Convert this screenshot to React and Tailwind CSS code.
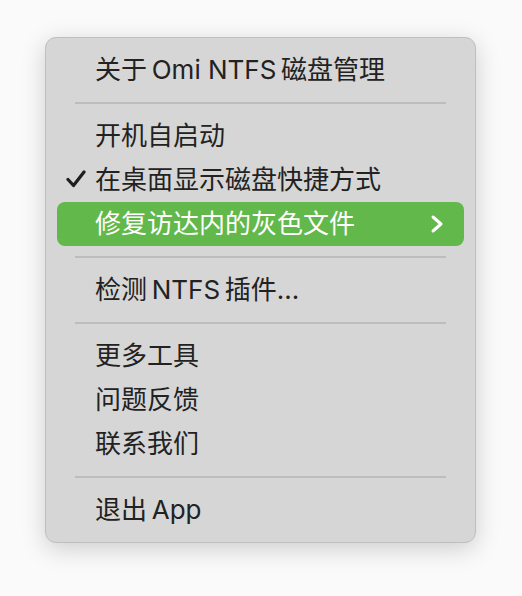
import React from 'react';

const Separator = () => (
  <div className="h-[22px] flex items-center px-[29px]">
    <div className="h-[2px] w-full bg-[#bdbdbd]" />
  </div>
);

const Item = ({ label, checked, active, submenu }) => (
  <div
    className={`relative h-[44px] mx-[11px] flex items-center pl-[38px] pr-[20px] rounded-[8px] ${
      active ? 'bg-[#62b84a] text-white' : 'text-[#222222]'
    }`}
  >
    {checked && (
      <svg className="absolute left-[9px] top-[12px]" width="20" height="18" viewBox="0 0 20 18">
        <path d="M2 9.5 L7.5 15.5 L18 2" fill="none" stroke="#1e1e1e" strokeWidth="3.2" strokeLinecap="round" strokeLinejoin="round" />
      </svg>
    )}
    <span className="flex-1 text-[26px] leading-none whitespace-nowrap">{label}</span>
    {submenu && (
      <svg width="14" height="20" viewBox="0 0 14 20">
        <path d="M3 3 L11 10 L3 17" fill="none" stroke="white" strokeWidth="3" strokeLinecap="round" strokeLinejoin="round" />
      </svg>
    )}
  </div>
);

export default function App() {
  return (
    <div
      className="w-[522px] h-[596px] bg-[#fafafa] pt-[37px] pl-[45px]"
      style={{ fontFamily: 'Inter, "Noto Sans CJK SC", sans-serif' }}
    >
      <div className="w-[431px] bg-[#d6d6d6] border border-[#bfbfbf] rounded-[11px] shadow-[0_6px_24px_rgba(0,0,0,0.18)] pt-[10px] pb-[10px]">
        <Item label={'关于\u2009Omi NTFS\u2009磁盘管理'} />
        <Separator />
        <Item label="开机自启动" />
        <Item label="在桌面显示磁盘快捷方式" checked />
        <Item label="修复访达内的灰色文件" active submenu />
        <Separator />
        <Item label={'检测\u2009NTFS\u2009插件...'} />
        <Separator />
        <Item label="更多工具" />
        <Item label="问题反馈" />
        <Item label="联系我们" />
        <Separator />
        <Item label={'退出\u2009App'} />
      </div>
    </div>
  );
}
